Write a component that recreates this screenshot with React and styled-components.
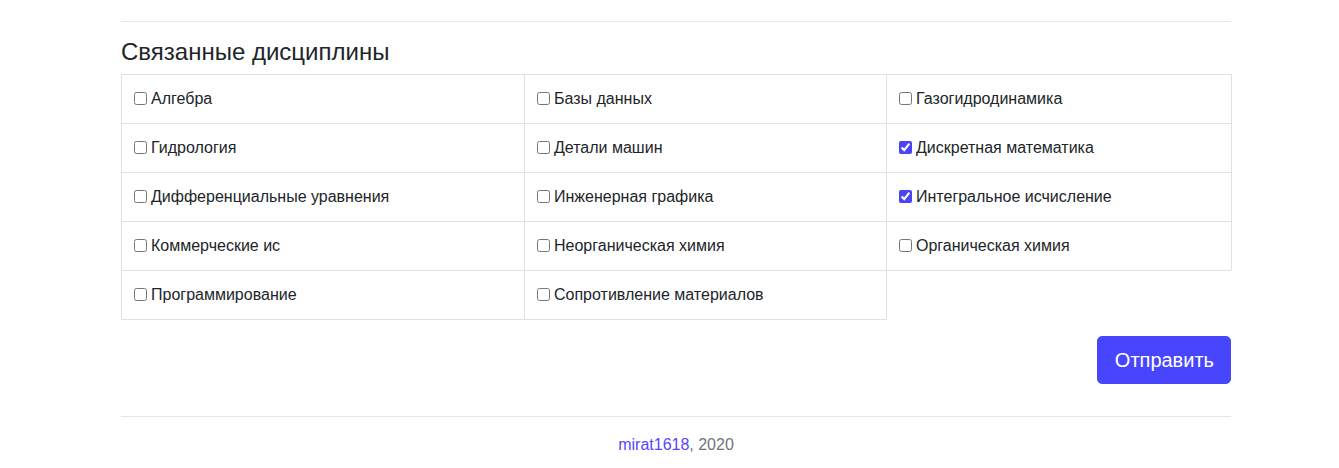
import React, {useState} from 'react'
import styled, {createGlobalStyle} from 'styled-components'

const disciplines = [
  ['Алгебра', 'Базы данных', 'Газогидродинамика'],
  ['Гидрология', 'Детали машин', 'Дискретная математика'],
  ['Дифференциальные уравнения', 'Инженерная графика', 'Интегральное исчисление'],
  ['Коммерческие ис', 'Неорганическая химия', 'Органическая химия'],
  ['Программирование', 'Сопротивление материалов', null],
]

const initialChecked = ['Дискретная математика', 'Интегральное исчисление']

const columnWidths = [403, 362, 345]

const App = () => {
  const [checked, setChecked] = useState(initialChecked)

  const toggle = name => {
    setChecked(prev =>
      prev.includes(name) ? prev.filter(n => n !== name) : [...prev, name],
    )
  }

  return (
    <>
      <GlobalStyle />
      <Container>
        <Divider />
        <Heading>Связанные дисциплины</Heading>
        <Table>
          <colgroup>
            {columnWidths.map(w => (
              <col key={w} style={{width: w}} />
            ))}
          </colgroup>
          <tbody>
            {disciplines.map(row => (
              <Row key={row[0]}>
                {row.map((name, i) =>
                  name ? (
                    <Cell key={name}>
                      <Label>
                        <Checkbox
                          type="checkbox"
                          checked={checked.includes(name)}
                          onChange={() => toggle(name)}
                        />
                        {name}
                      </Label>
                    </Cell>
                  ) : (
                    <EmptyCell key={`empty-${i}`} />
                  ),
                )}
              </Row>
            ))}
          </tbody>
        </Table>
        <Actions>
          <SubmitButton type="button">Отправить</SubmitButton>
        </Actions>
        <FooterDivider />
        <Footer>
          <FooterLink href="#">mirat1618</FooterLink>, 2020
        </Footer>
      </Container>
    </>
  )
}

const GlobalStyle = createGlobalStyle`
  body {
    margin: 0;
    background: #fff;
    color: #212529;
    font-family: 'Liberation Sans', Arial, sans-serif;
    font-size: 16px;
    line-height: 1.5;
  }
`

const Container = styled.div`
  width: 1110px;
  margin-left: 121px;
  padding-top: 21px;
`

const Divider = styled.hr`
  margin: 0 0 16px;
  border: 0;
  border-top: 1px solid #e4e6e9;
`

const Heading = styled.h4`
  margin: 0 0 7px;
  font-size: 24px;
  font-weight: 400;
  line-height: 1.2;
`

const Table = styled.table`
  width: 1110px;
  border-collapse: collapse;
  table-layout: fixed;
`

const Row = styled.tr`
  height: 49px;
`

const Cell = styled.td`
  border: 1px solid #dee2e6;
  padding: 0 12px;
  line-height: 24px;
  vertical-align: middle;
`

const EmptyCell = styled.td`
  border: 0;
  border-top: 1px solid #dee2e6;
  padding: 0;
`

const Label = styled.label`
  display: block;
  white-space: nowrap;
`

const Checkbox = styled.input`
  width: 13px;
  height: 13px;
  margin: 0 4px 0 0;
  vertical-align: -1px;
  accent-color: #4a44f5;
`

const Actions = styled.div`
  display: flex;
  justify-content: flex-end;
  margin-top: 16px;
`

const SubmitButton = styled.button`
  background-color: #4845ff;
  color: #fff;
  border: 1px solid #4845ff;
  border-radius: 5px;
  padding: 8px 16px 8px 17px;
  font-family: 'Liberation Sans', Arial, sans-serif;
  font-size: 20px;
  line-height: 1.5;
  cursor: pointer;
`

const FooterDivider = styled.hr`
  margin: 32px 0 16px;
  border: 0;
  border-top: 1px solid #e4e6e9;
`

const Footer = styled.p`
  margin: 0;
  text-align: center;
  color: #6c757d;
`

const FooterLink = styled.a`
  color: #5547ff;
  text-decoration: none;
`

export default App
